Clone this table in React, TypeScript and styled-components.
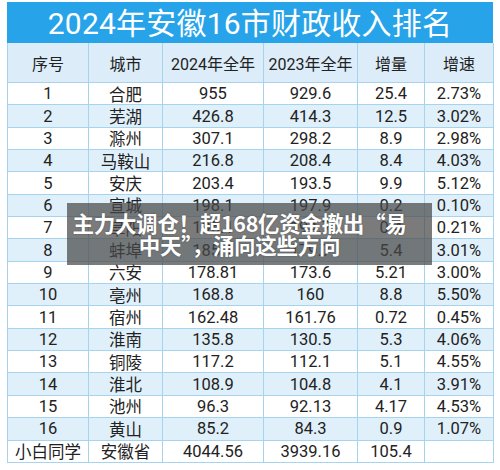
import React from 'react';
import styled, { createGlobalStyle } from 'styled-components';

const GlobalStyle = createGlobalStyle`
	html, body {
		margin: 0;
		padding: 0;
		background: #fff;
	}
	body {
		font-family: Roboto, "Noto Sans CJK SC", sans-serif;
		color: #222;
	}
`;

const Page = styled('div')`
	position: relative;
	width: 500px;
	height: 470px;
	padding: 2px 7px 0;
	box-sizing: border-box;
	background: #fff;
`;

const Title = styled('div')`
	height: 41px;
	background: #27a3ea;
	color: #fff;
	font-size: 30px;
	line-height: 43px;
	text-align: center;
	letter-spacing: 0.2px;
`;

const Grid = styled('div')`
	display: grid;
	grid-template-columns: 81px 74px 101px 94px 67px 69px;
	grid-template-rows: 40px repeat(17, 22.35px);
	border-left: 1px solid #a6d3ee;
	box-sizing: border-box;
`;

const Cell = styled('div')<{ $bg: string; $head?: boolean }>`
	display: flex;
	align-items: center;
	justify-content: center;
	background: ${props => props.$bg};
	border-right: 1px solid #a6d3ee;
	border-bottom: 1px solid #a6d3ee;
	font-size: ${props => (props.$head ? '16px' : '16.5px')};
	white-space: nowrap;
	overflow: hidden;
`;

const Overlay = styled('div')`
	position: absolute;
	left: 67px;
	top: 203px;
	width: 365px;
	height: 62px;
	padding-right: 20px;
	box-sizing: border-box;
	background: rgba(72, 72, 72, 0.72);
	color: #fff;
	font-family: "Noto Sans CJK SC", sans-serif;
	font-weight: 700;
	font-size: 21.5px;
	line-height: 22px;
	letter-spacing: -0.3px;
	text-align: center;
	display: flex;
	flex-direction: column;
	justify-content: center;
	text-shadow: 0 0 2px rgba(0, 0, 0, 0.3);
`;

const headers = ['序号', '城市', '2024年全年', '2023年全年', '增量', '增速'];

const rows: string[][] = [
	['1', '合肥', '955', '929.6', '25.4', '2.73%'],
	['2', '芜湖', '426.8', '414.3', '12.5', '3.02%'],
	['3', '滁州', '307.1', '298.2', '8.9', '2.98%'],
	['4', '马鞍山', '216.8', '208.4', '8.4', '4.03%'],
	['5', '安庆', '203.4', '193.5', '9.9', '5.12%'],
	['6', '宣城', '198.1', '197.9', '0.2', '0.10%'],
	['7', '阜阳', '195.1', '194.7', '0.4', '0.21%'],
	['8', '蚌埠', '185.1', '179.7', '5.4', '3.01%'],
	['9', '六安', '178.81', '173.6', '5.21', '3.00%'],
	['10', '亳州', '168.8', '160', '8.8', '5.50%'],
	['11', '宿州', '162.48', '161.76', '0.72', '0.45%'],
	['12', '淮南', '135.8', '130.5', '5.3', '4.06%'],
	['13', '铜陵', '117.2', '112.1', '5.1', '4.55%'],
	['14', '淮北', '108.9', '104.8', '4.1', '3.91%'],
	['15', '池州', '96.3', '92.13', '4.17', '4.53%'],
	['16', '黄山', '85.2', '84.3', '0.9', '1.07%'],
	['小白同学', '安徽省', '4044.56', '3939.16', '105.4', ''],
];

const HEAD_BG = '#dcedf9';
const STRIPE_BG = '#dff0fb';

export default function App() {
	return (
		<>
			<GlobalStyle />
			<Page>
				<Title>2024年安徽16市财政收入排名</Title>
				<Grid>
					{headers.map(h => (
						<Cell key={h} $bg={HEAD_BG} $head>{h}</Cell>
					))}
					{rows.map((row, i) =>
						row.map((v, j) => (
							<Cell key={i + '-' + j} $bg={i % 2 === 1 ? STRIPE_BG : '#fff'}>{v}</Cell>
						))
					)}
				</Grid>
				<Overlay>
					<div>主力大调仓！超168亿资金撤出“易</div>
					<div>中天”，涌向这些方向</div>
				</Overlay>
			</Page>
		</>
	);
}
